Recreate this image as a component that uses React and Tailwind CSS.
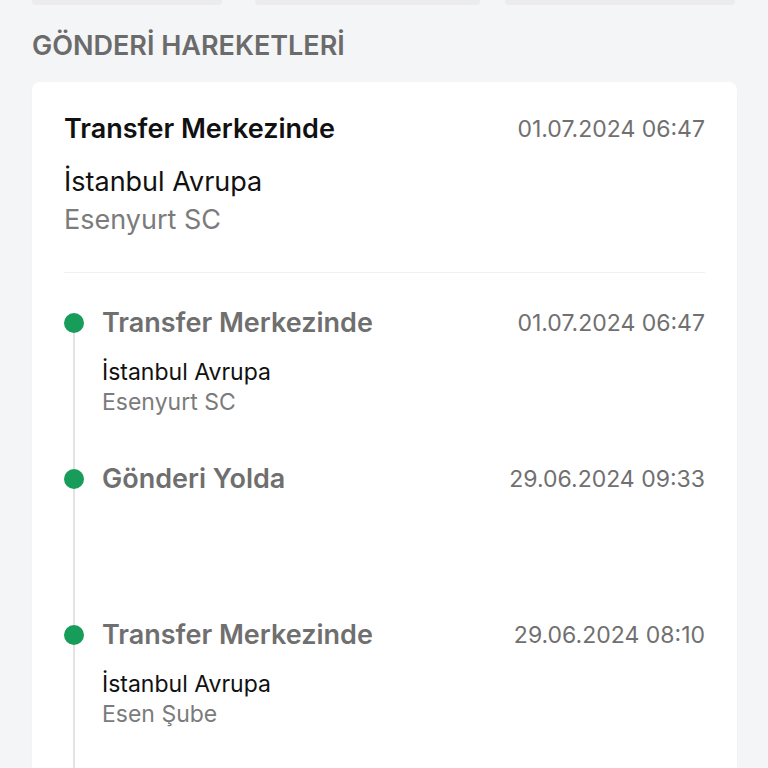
const events = [
  {
    title: 'Transfer Merkezinde',
    date: '01.07.2024 06:47',
    city: 'İstanbul Avrupa',
    branch: 'Esenyurt SC',
  },
  {
    title: 'Gönderi Yolda',
    date: '29.06.2024 09:33',
  },
  {
    title: 'Transfer Merkezinde',
    date: '29.06.2024 08:10',
    city: 'İstanbul Avrupa',
    branch: 'Esen Şube',
  },
];

function TimelineItem({ event, first }) {
  return (
    <div className="flex h-[156px]">
      <div className="flex w-5 flex-col items-center">
        <div className={first ? 'h-[6px] w-[2px]' : 'h-[6px] w-[2px] bg-[#e3e3e3]'} />
        <div className="h-5 w-5 shrink-0 rounded-full bg-[#179c59]" />
        <div className="w-[2px] flex-1 bg-[#e3e3e3]" />
      </div>
      <div className="ml-[18px] flex-1">
        <div className="flex items-center justify-between">
          <span className="text-[27px] font-semibold leading-[32px] text-[#6f6f6f]">{event.title}</span>
          <span className="text-[23px] leading-[32px] text-[#707070]">{event.date}</span>
        </div>
        {event.city && (
          <div className="mt-[18px] text-[23px] leading-[30px]">
            <div className="text-[#111]">{event.city}</div>
            <div className="text-[#7b7b7b]">{event.branch}</div>
          </div>
        )}
      </div>
    </div>
  );
}

export default function App() {
  const latest = events[0];

  return (
    <div className="min-h-screen bg-[#f4f5f7] font-['Inter',sans-serif]">
      {/* bottoms of the summary cards above */}
      <div className="flex px-8">
        <div className="h-[5px] w-[190px] rounded-b bg-[#ececee]" />
        <div className="ml-[33px] h-[5px] w-[225px] rounded-b bg-[#ececee]" />
        <div className="ml-[25px] h-[5px] w-[230px] rounded-b bg-[#ececee]" />
      </div>

      <h2 className="mt-[25px] px-8 text-[27px] font-semibold leading-[32px] text-[#6b6b6b]">
        GÖNDERİ HAREKETLERİ
      </h2>

      <div className="ml-8 mr-[31px] mt-[20px] rounded-lg bg-white px-8 pt-[31px] shadow-[0_1px_2px_rgba(0,0,0,0.03)]">
        <div className="flex items-start justify-between">
          <span className="text-[27px] font-semibold leading-[32px] text-[#111]">{latest.title}</span>
          <span className="text-[23px] leading-[32px] text-[#707070]">{latest.date}</span>
        </div>
        <div className="mt-[18px] text-[27px] leading-[38px]">
          <div className="text-[#111]">{latest.city}</div>
          <div className="text-[#7b7b7b]">{latest.branch}</div>
        </div>
        <div className="mt-[33px] h-px bg-[#f0f0f0]" />

        <div className="pt-[34px]">
          {events.map((event, i) => (
            <TimelineItem key={i} event={event} first={i === 0} />
          ))}
        </div>
      </div>
    </div>
  );
}
